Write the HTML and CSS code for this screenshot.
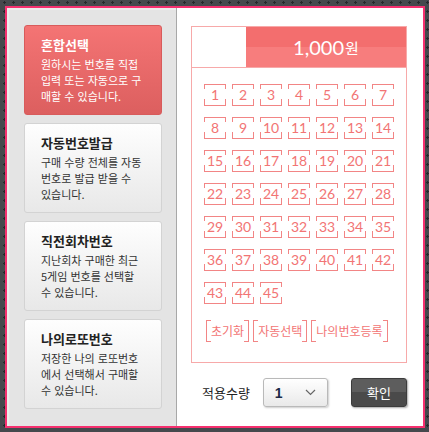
FILE: index.html
```html
<!DOCTYPE html>
<html lang="ko">
<head>
    <meta charset="UTF-8">
    <meta name="viewport" content="width=device-width, initial-scale=1.0">
    <title>로또 구매</title>
    <link rel="stylesheet" href="styles.css">
</head>
<body>
    <div class="lotto-box">
        <div class="type-list">
            <div class="type-card active">
                <h2>혼합선택</h2>
                <p>원하시는 번호를 직접<br>입력 또는 자동으로 구<br>매할 수 있습니다.</p>
            </div>
            <div class="type-card">
                <h2>자동번호발급</h2>
                <p>구매 수량 전체를 자동<br>번호로 발급 받을 수<br>있습니다.</p>
            </div>
            <div class="type-card">
                <h2>직전회차번호</h2>
                <p>지난회차 구매한 최근<br>5게임 번호를 선택할<br>수 있습니다.</p>
            </div>
            <div class="type-card">
                <h2>나의로또번호</h2>
                <p>저장한 나의 로또번호<br>에서 선택해서 구매할<br>수 있습니다.</p>
            </div>
        </div>

        <div class="pick-panel">
            <div class="pick-box">
                <div class="pick-head">
                    <div class="pick-price">1,000<small>원</small></div>
                </div>
                <div class="num-grid" id="numGrid"></div>
                <div class="pick-btns">
                    <button type="button" class="bracket-btn">초기화</button>
                    <button type="button" class="bracket-btn">자동선택</button>
                    <button type="button" class="bracket-btn">나의번호등록</button>
                </div>
            </div>

            <div class="qty-row">
                <span class="qty-label">적용수량</span>
                <div class="qty-select">
                    <span>1</span>
                    <svg width="11" height="7" viewBox="0 0 11 7"><polyline points="1,1 5.5,5.5 10,1" fill="none" stroke="#666" stroke-width="1.2"/></svg>
                </div>
                <button type="button" class="ok-btn">확인</button>
            </div>
        </div>
    </div>

    <script>
        const numGrid = document.getElementById('numGrid');
        for (let i = 1; i <= 45; i++) {
            const num = document.createElement('span');
            num.classList.add('num');
            num.textContent = i;
            numGrid.appendChild(num);
        }
    </script>
</body>
</html>
```

FILE: styles.css
```css
body {
    margin: 0;
    padding: 6px 4px 0 5px;
    background-color: #45494d;
    background-image: radial-gradient(circle, #25282b 1px, transparent 1.3px);
    background-size: 9px 9px;
    background-position: 0 -2px;
    font-family: "Noto Sans CJK KR", sans-serif;
    color: #333;
}

.lotto-box {
    width: 420px;
    height: 422px;
    box-sizing: border-box;
    border: 2px solid #f5306f;
    background-color: #ffffff;
    display: flex;
}

/* left column with purchase types */
.type-list {
    width: 170px;
    box-sizing: border-box;
    padding: 17px 14px 0 17px;
    background-color: #e4e4e4;
    border-right: 1px solid #a8a8a8;
    box-shadow: inset 2px 2px 0 #ececec;
    display: flex;
    flex-direction: column;
    gap: 8px;
}

.type-card {
    height: 90px;
    box-sizing: border-box;
    padding: 9px 0 0 16px;
    border: 1px solid #d3d3d3;
    border-radius: 3px;
    background: linear-gradient(#fefefe, #e8e8e8);
    color: #333;
}

.type-card h2 {
    margin: 0;
    font-size: 13px;
    font-weight: 700;
    line-height: 20px;
    color: #222;
}

.type-card p {
    margin: 1px 0 0;
    font-size: 11px;
    line-height: 16px;
}

.type-card.active {
    background: linear-gradient(#f47474, #dc5f5f);
    border-color: #d85b5b;
    color: #ffffff;
}

.type-card.active h2 {
    color: #ffffff;
}

/* right column */
.pick-panel {
    flex: 1;
    padding: 18px 16px 0 14px;
}

.pick-box {
    border: 1px solid #f7a9a9;
}

.pick-head {
    height: 40px;
    border-bottom: 1px solid #f7a9a9;
    display: flex;
    justify-content: flex-end;
}

.pick-price {
    width: 160px;
    background: linear-gradient(#f36e6e 50%, #f77d7d 50%);
    color: #ffffff;
    font-family: Lato, sans-serif;
    font-size: 20px;
    display: flex;
    align-items: center;
    justify-content: center;
}

.pick-price small {
    font-family: "Noto Sans CJK KR", sans-serif;
    font-size: 15px;
    margin-left: 1px;
}

.num-grid {
    display: grid;
    grid-template-columns: repeat(7, 22px);
    column-gap: 6px;
    row-gap: 11px;
    padding: 16px 0 0 12px;
}

.num {
    height: 22px;
    box-sizing: border-box;
    border-top: 1px solid #f28585;
    border-bottom: 1px solid #f28585;
    background:
        linear-gradient(#f28585, #f28585) left top / 1px 4px no-repeat,
        linear-gradient(#f28585, #f28585) right top / 1px 4px no-repeat,
        linear-gradient(#f28585, #f28585) left bottom / 1px 6px no-repeat,
        linear-gradient(#f28585, #f28585) right bottom / 1px 6px no-repeat;
    font-family: Lato, sans-serif;
    font-size: 14px;
    line-height: 20px;
    text-align: center;
    color: #f27474;
}

.pick-btns {
    display: flex;
    gap: 4px;
    padding: 16px 0 20px 14px;
}

.bracket-btn {
    height: 22px;
    padding: 0 4px;
    border: none;
    border-left: 1px solid #f28585;
    border-right: 1px solid #f28585;
    background:
        linear-gradient(#f28585, #f28585) left top / 4px 1px no-repeat,
        linear-gradient(#f28585, #f28585) right top / 4px 1px no-repeat,
        linear-gradient(#f28585, #f28585) left bottom / 4px 1px no-repeat,
        linear-gradient(#f28585, #f28585) right bottom / 4px 1px no-repeat;
    font-family: "Noto Sans CJK KR", sans-serif;
    font-size: 12px;
    line-height: 20px;
    color: #f27474;
    cursor: pointer;
}

.qty-row {
    display: flex;
    align-items: center;
    padding: 15px 0 0 11px;
}

.qty-label {
    font-size: 13px;
    color: #222;
}

.qty-select {
    width: 65px;
    height: 29px;
    box-sizing: border-box;
    margin-left: 13px;
    padding: 0 11px 0 11px;
    border: 1px solid #b9b9b9;
    border-radius: 3px;
    background: linear-gradient(#ffffff, #e9e9e9);
    box-shadow: 1px 1px 2px rgba(0, 0, 0, 0.2);
    display: flex;
    align-items: center;
    justify-content: space-between;
    font-family: "Liberation Sans", Arial, sans-serif;
    font-size: 14px;
    font-weight: 700;
    color: #1b2946;
}

.ok-btn {
    width: 56px;
    height: 29px;
    margin-left: auto;
    border: 1px solid #3c3c3c;
    border-radius: 3px;
    background: linear-gradient(#5d5d5d 50%, #4a4a4a 50%);
    box-shadow: 1px 1px 2px rgba(0, 0, 0, 0.35);
    color: #ffffff;
    font-family: "Noto Sans CJK KR", sans-serif;
    font-size: 13px;
    cursor: pointer;
}
```
